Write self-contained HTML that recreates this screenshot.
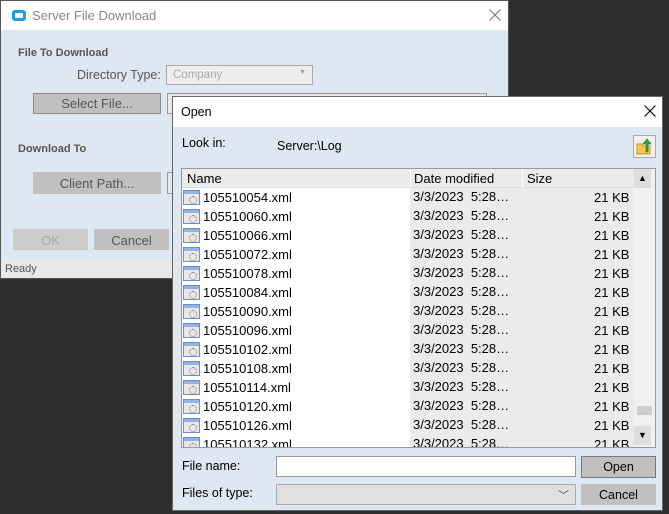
<!DOCTYPE html>
<html><head><style>
*{box-sizing:border-box;margin:0;padding:0}
body{width:669px;height:514px;background:#2e2e2e;position:relative;overflow:hidden;font-family:"Liberation Sans",sans-serif;font-size:12px;color:#000}
.a{position:absolute}
.btn{position:absolute;background:#c0c0c0;border:1px solid #8a8a8a;text-align:center;color:#555;font-size:13px}
.row{position:absolute;left:0;height:19px;width:452px;font-size:13px}
.ic{position:absolute;left:1px;top:2px;width:17px;height:15px;border:1px solid #6c8fc9;background:linear-gradient(#8fb3ea 0,#8fb3ea 3px,#e8e8e8 3px)}
.ic:after{content:"";position:absolute;left:5px;top:5px;width:6px;height:6px;border-radius:50%;border:1.5px dotted #777}
</style></head><body>
<!-- left window -->
<div class="a" style="left:0;top:0;width:509px;height:279px;background:#dfe7f2;border:1px solid #555">
 <div class="a" style="left:0;top:0;width:507px;height:29px;background:#fff">
  <div class="a" style="left:11px;top:9px;width:14px;height:11px;background:#1aa0e0;border-radius:3px"><div class="a" style="left:3px;top:3px;width:8px;height:5px;background:#fff;border-radius:1px"></div></div>
  <div class="a" style="left:31px;top:7px;font-size:13px;color:#888">Server File Download</div>
  <svg class="a" style="left:488px;top:8px" width="12" height="12"><path d="M0.5 0.5L11.5 11.5M11.5 0.5L0.5 11.5" stroke="#777" stroke-width="1.1"/></svg>
 </div>
 <div class="a" style="left:17px;top:46px;font-weight:bold;color:#555;font-size:11px">File To Download</div>
 <div class="a" style="left:76px;top:67px;color:#555;font-size:12.5px">Directory Type:</div>
 <div class="a" style="left:165px;top:64px;width:147px;height:20px;background:#eee;border:1px solid #aaa;color:#aaa;padding:3px 6px;font-size:11.5px">Company<span style="position:absolute;right:6px;top:3px;font-size:7px;color:#999">▼</span></div>
 <div class="btn" style="left:32px;top:92px;width:128px;height:21px;padding-top:2px">Select File...</div>
 <div class="a" style="left:166px;top:92px;width:320px;height:21px;border:1px solid #999;background:#e8e8e8"></div>
 <div class="a" style="left:17px;top:142px;font-weight:bold;color:#555;font-size:11px">Download To</div>
 <div class="btn" style="left:32px;top:171px;width:128px;height:22px;border-color:#c0c0c0;padding-top:3px">Client Path...</div>
 <div class="a" style="left:166px;top:171px;width:10px;height:22px;border:1px solid #999"></div>
 <div class="btn" style="left:12px;top:228px;width:75px;height:21px;background:#ccc;border-color:#ccc;color:#aaa;padding-top:3px">OK</div>
 <div class="btn" style="left:93px;top:228px;width:75px;height:21px;border-color:#c0c0c0;padding-top:3px">Cancel</div>
 <div class="a" style="left:0;top:259px;width:507px;height:18px;background:#e8e8e8;padding:3px 4px;color:#555;font-size:11px">Ready</div>
</div>
<!-- open dialog -->
<div class="a" style="left:172px;top:96px;width:491px;height:415px;background:#dfe7f2;border:1px solid #666">
 <div class="a" style="left:0;top:0;width:489px;height:30px;background:#fff">
  <div class="a" style="left:8px;top:8px;font-size:12.5px">Open</div>
  <svg class="a" style="left:471px;top:8px" width="12" height="12"><path d="M0.5 0.5L11.5 11.5M11.5 0.5L0.5 11.5" stroke="#000" stroke-width="1.1"/></svg>
 </div>
 <div class="a" style="left:9px;top:39px;font-size:12.5px">Look in:</div>
 <div class="a" style="left:104px;top:42px;font-size:12.5px">Server:\Log</div>
 <div class="a" style="left:460px;top:38px;width:23px;height:23px;border:1px solid #aaa;background:#f0f0f0">
  <svg width="21" height="21" viewBox="0 0 21 21"><path d="M3 8h5l1 2h7v8H3z" fill="#f3c84d" stroke="#c9962a"/><path d="M12 16V8h-3l4-5 4 5h-3v8z" fill="#2ea43a" stroke="#1a7a22" stroke-width=".6"/></svg>
 </div>
 <!-- list -->
 <div class="a" style="left:8px;top:71px;width:475px;height:280px;border:1px solid #999;background:#fff;overflow:hidden">
  <div class="a" style="left:228px;top:0;width:224px;height:280px;background:#ebebeb"></div>
  <div class="a" style="left:0;top:0;width:452px;height:19px;background:#ebebeb;border-bottom:1px solid #ddd;font-size:13px">
   <div class="a" style="left:5px;top:2px">Name</div>
   <div class="a" style="left:228px;top:0;width:1px;height:19px;background:#fff"></div>
   <div class="a" style="left:232px;top:2px">Date modified</div>
   <div class="a" style="left:340px;top:0;width:1px;height:19px;background:#fff"></div>
   <div class="a" style="left:345px;top:2px">Size</div>
  </div>
  <div class="a" style="left:452px;top:0;width:21px;height:280px;background:#f0f0f0">
   <div class="a" style="left:0;top:0;width:17px;height:19px;background:#ddd;text-align:center;font-size:9px;padding-top:4px">▲</div>
   <div class="a" style="left:3px;top:237px;width:15px;height:9px;background:#cdcdcd"></div>
   <div class="a" style="left:0;top:257px;width:17px;height:19px;background:#ddd;text-align:center;font-size:9px;padding-top:4px">▼</div>
  </div>
  <div id="rows"></div>
 </div>
 <div class="a" style="left:9px;top:362px;font-size:12.5px">File name:</div>
 <div class="a" style="left:103px;top:359px;width:300px;height:21px;background:#fff;border:1px solid #999"></div>
 <div class="btn" style="left:408px;top:359px;width:75px;height:22px;color:#000;border-color:#777;padding-top:3px;font-size:12.5px">Open</div>
 <div class="a" style="left:9px;top:389px;font-size:12.5px">Files of type:</div>
 <div class="a" style="left:103px;top:387px;width:300px;height:21px;background:#e0e0e0;border:1px solid #aaa"><span style="position:absolute;right:6px;top:2px;font-size:11px;color:#555">﹀</span></div>
 <div class="btn" style="left:408px;top:387px;width:75px;height:21px;color:#000;border-color:#c0c0c0;padding-top:3px;font-size:12.5px">Cancel</div>
</div>
<script>
var h='';var n=[54,60,66,72,78,84,90,96,102,108,114,120,126,132];
n.forEach(function(v,i){h+='<div class="row" style="top:'+(19+i*19)+'px"><div class="ic"></div><div class="a" style="left:21px;top:2px">105510'+(v<100?'0'+v:v)+'.xml</div><div class="a" style="left:231px;top:1px;font-size:13px">3/3/2023&nbsp; 5:28…</div><div class="a" style="left:412px;top:2px">21 KB</div></div>';});
document.getElementById('rows').innerHTML=h;
</script>
</body></html>
